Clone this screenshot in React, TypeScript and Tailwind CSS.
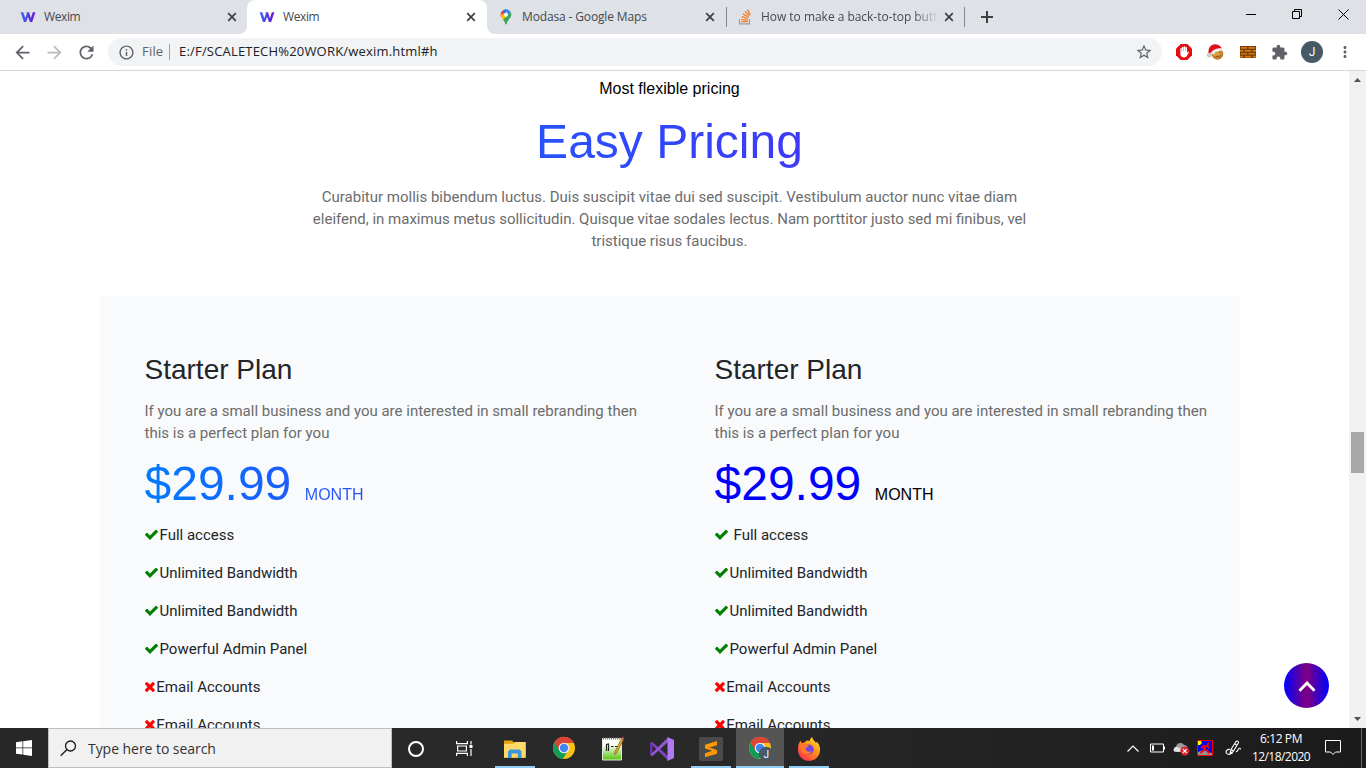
import type { ReactNode } from "react";
import {
  MdArrowBack,
  MdArrowForward,
  MdExtension,
  MdInfoOutline,
  MdMoreVert,
  MdRefresh,
  MdStarBorder,
} from "react-icons/md";

function WeximLogo() {
  return (
    <svg width="16" height="16" viewBox="0 0 16 16">
      <defs>
        <linearGradient id="wx" x1="0" x2="1">
          <stop offset="0" stopColor="#3a6cf0" />
          <stop offset="1" stopColor="#6a12d8" />
        </linearGradient>
      </defs>
      <path
        d="M.6 3.300h2.700L5.300 9.300 6.900 4.500 6.500 3.300h2.600L10.900 9.300l1.900-6h2.600L12.200 13H9.900L8 7.700 6.200 13H3.900z"
        fill="url(#wx)"
      />
    </svg>
  );
}

function MapsPin() {
  return (
    <svg width="16" height="16" viewBox="0 0 16 16">
      <path d="M2.8 7.8a5.3 5.3 0 0 1 .3-4L6 6.300z" fill="#ea4335" />
      <path d="M3 4A5.400 5.400 0 0 1 9.600.5L6 6z" fill="#1a73e8" />
      <path d="M3 3.800A5.400 5.400 0 0 1 4.400 1.800L6.900 4 5.300 6.300z" fill="#ea4335" />
      <path d="M9.500.5a5.400 5.400 0 0 1 3.300 2.700L9.500 7 8 3z" fill="#4285f4" />
      <path d="M2.700 6c.1 2 1.200 3.300 2.400 4.800L9.600 6.500 6.200 4.500z" fill="#fbbc04" />
      <path d="M12.800 3.300C14 6 13 8 11 10.300c-1.400 1.700-1.700 2.600-2.100 4.200-.3 1.300-1.400 1.300-1.700 0-.4-1.500-1-2.500-2.200-3.800z" fill="#34a853" />
      <circle cx="8" cy="5.700" r="2" fill="#fff" />
    </svg>
  );
}

function StackLogo() {
  return (
    <svg width="16" height="16" viewBox="0 0 16 16" fill="none">
      <path d="M2.500 10v4.800h10V10" stroke="#9a9ea3" strokeWidth="1.200" />
      <g stroke="#f48024" strokeWidth="1.300">
        <path d="M4.300 12.600h6.500M4.300 10.400l6.500.9M4.700 7.700l6.300 1.900M6 4.900l5.600 3.200M8 2.300l4.500 4.600M10.500.6l2.800 5.300" />
      </g>
    </svg>
  );
}

function Cross() {
  return (
    <svg width="10" height="10" viewBox="0 0 10 10" className="shrink-0">
      <path d="M1.200 1.200l7.600 7.600M8.800 1.200L1.200 8.800" stroke="#3c4043" strokeWidth="1.700" />
    </svg>
  );
}

function Tab({ icon, title, spacing = "" }: { icon: ReactNode; title: string; spacing?: string }) {
  return (
    <div className="flex h-full items-center pl-5 pr-2.5">
      {icon}
      <div className={`ml-2 w-[177px] shrink-0 overflow-hidden whitespace-nowrap text-xs text-[#45494d] ${spacing}`}>
        {title}
      </div>
      <span className="ml-1.5">
        <Cross />
      </span>
    </div>
  );
}

function TabStrip() {
  return (
    <div className="flex h-[34px] bg-white">
      <div className="w-[247px] rounded-br-lg bg-[#dee1e6]">
        <Tab icon={<WeximLogo />} title="Wexim" spacing="tracking-[-0.4px]" />
      </div>
      <div className="w-[240px] bg-[#dee1e6]">
        <div className="h-full rounded-t-lg bg-white">
          <div className="-ml-2 h-full">
            <Tab icon={<WeximLogo />} title="Wexim" spacing="tracking-[-0.4px]" />
          </div>
        </div>
      </div>
      <div className="flex flex-1 items-center rounded-bl-lg bg-[#dee1e6]">
        <div className="h-full w-[239px]">
          <div className="-ml-[9px] h-full">
            <Tab icon={<MapsPin />} title="Modasa - Google Maps" spacing="tracking-[-0.14px]" />
          </div>
        </div>
        <div className="h-5 w-px bg-[#85888c]" />
        <div className="h-full w-[237px]">
          <div className="-ml-[10px] h-full">
            <Tab
              icon={<StackLogo />}
              title="How to make a back-to-top button"
              spacing="tracking-[-0.03px] [mask-image:linear-gradient(to_right,black_152px,transparent_178px)]"
            />
          </div>
        </div>
        <div className="h-5 w-px bg-[#85888c]" />
        <svg width="12" height="12" viewBox="0 0 12 12" className="ml-[16px]">
          <path d="M6 0v12M0 6h12" stroke="#3c4043" strokeWidth="2" />
        </svg>
        <div className="ml-auto flex items-center gap-9 pb-[6px] pr-[17px]">
          <svg width="10" height="10" viewBox="0 0 10 10">
            <path d="M0 5.500h10" stroke="#000" />
          </svg>
          <svg width="10" height="10" viewBox="0 0 10 10" fill="none" stroke="#000">
            <path d="M.5 2.500h7v7h-7zM2.500 2.500v-2h7v7h-2" />
          </svg>
          <svg width="11" height="11" viewBox="0 0 11 11" stroke="#000">
            <path d="M.5.5l10 10M10.500.5l-10 10" />
          </svg>
        </div>
      </div>
    </div>
  );
}

function AdBlockIcon() {
  return (
    <svg width="16" height="16" viewBox="0 0 16 16">
      <path d="M4.700 0h6.600L16 4.700v6.600L11.300 16H4.700L0 11.300V4.700z" fill="#e40d12" />
      <path
        d="M4.300 8V4.800a.7.7 0 0 1 1.400 0V7.500h.3V3.500a.75.75 0 0 1 1.500 0v3.700h.3V2.900a.75.75 0 0 1 1.500 0v4.300h.3V3.700a.7.7 0 0 1 1.400 0V9l.8-1.200c.7-.7 1.400-.1 1 .6L11 11.800C10.300 13 9.500 13.500 8.300 13.500 6 13.500 4.300 12 4.300 10z"
        fill="#fff"
      />
    </svg>
  );
}

function CookieIcon() {
  return (
    <svg width="17" height="16" viewBox="0 0 17 16">
      <circle cx="10.500" cy="10" r="5.800" fill="#c67d28" />
      <circle cx="10.200" cy="9" r="4.300" fill="#dfa24e" />
      <path d="M8 8.500h1.500M12 8.300h1.500M8.500 12.300h4M13.500 10.500v1" stroke="#7a4312" strokeWidth="1.100" />
      <path d="M1.500 9C1 4 4 0 8.500.3c3 .2 5 1.700 6.500 4.200L4.500 8.800z" fill="#dd1118" />
      <path d="M4 8.500C7 5 11 3.800 15.300 4.500l.4 2C12 6.300 9 7.300 6.200 10.500z" fill="#f5f3ef" />
      <circle cx="2.300" cy="11" r="2" fill="#d7d4ce" stroke="#999" strokeWidth=".5" />
    </svg>
  );
}

function BrickIcon() {
  return (
    <svg width="16" height="12" viewBox="0 0 16 12">
      <rect width="16" height="12" fill="#783c06" />
      <path
        d="M1 1h6v1.700H1zM8.500 1H15v1.700H8.500zM0 4h3.500v1.700H0zM5 4h6v1.700H5zM12.500 4H16v1.700h-3.500zM1 7h6v1.600H1zM8.500 7H15v1.600H8.500zM0 9.800h3.500v1.600H0zM5 9.800h6v1.600H5zM12.500 9.800H16v1.600h-3.500z"
        fill="#d07a11"
      />
    </svg>
  );
}

function Toolbar() {
  return (
    <div className="flex h-[37px] items-center border-b border-[#d5d7da] bg-white pl-[12px] text-[#5f6368]">
      <MdArrowBack size={21} />
      <MdArrowForward size={21} className="ml-[11px] text-[#babcbe]" />
      <MdRefresh size={21} className="ml-[11px]" />
      <div className="ml-[11px] flex h-7 w-[1054px] items-center rounded-full bg-[#f1f3f4] pl-[10px] pr-[9px]">
        <MdInfoOutline size={17} />
        <span className="ml-[7px] w-[27px] text-[13px] tracking-[0.2px]">File</span>
        <span className="mr-[9px] h-4 w-px bg-[#9aa0a6]" />
        <span className="text-[13px] tracking-[0.19px] text-[#202124]">E:/F/SCALETECH%20WORK/wexim.html#h</span>
        <MdStarBorder size={18} className="ml-auto" />
      </div>
      <div className="ml-[14px] flex items-center">
        <AdBlockIcon />
        <span className="ml-[15px]">
          <CookieIcon />
        </span>
        <span className="ml-[16px]">
          <BrickIcon />
        </span>
        <MdExtension size={17} className="ml-[15px]" />
        <span className="ml-[13px] flex size-[22px] items-center justify-center rounded-full bg-[#455a64] font-['Roboto',sans-serif] text-xs text-white">
          J
        </span>
        <MdMoreVert size={18} className="ml-[13px]" />
      </div>
    </div>
  );
}

function Check() {
  return (
    <svg width="15" height="15" viewBox="0 0 1792 1792" fill="#008000" className="mb-0.5 mr-px -ml-px shrink-0">
      <path d="M1671 566q0 40-28 68l-724 724-136 136q-28 28-68 28t-68-28l-136-136-362-362q-28-28-28-68t28-68l136-136q28-28 68-28t68 28l294 295 656-657q28-28 68-28t68 28l136 136q28 28 28 68z" />
    </svg>
  );
}

function Times() {
  return (
    <svg width="11.800" height="15" viewBox="192 0 1408 1792" fill="#ff0000" className="mb-0.5 mr-px -ml-px shrink-0">
      <path d="M1490 1322q0 40-28 68l-136 136q-28 28-68 28t-68-28l-294-294-294 294q-28 28-68 28t-68-28l-136-136q-28-28-28-68t28-68l294-294-294-294q-28-28-28-68t28-68l136-136q28-28 68-28t68 28l294 294 294-294q28-28 68-28t68 28l136 136q28 28 28 68t-28 68l-294 294 294 294q28 28 28 68z" />
    </svg>
  );
}

const features = [
  { label: "Full access", ok: true },
  { label: "Unlimited Bandwidth", ok: true },
  { label: "Unlimited Bandwidth", ok: true },
  { label: "Powerful Admin Panel", ok: true },
  { label: "Email Accounts", ok: false },
  { label: "Email Accounts", ok: false },
];

function Plan({ gradient }: { gradient: boolean }) {
  return (
    <div className="w-[570px] pl-[44.500px] pt-[57px]">
      <h3 className="font-['Liberation_Sans',sans-serif] text-[28px] leading-[34px] text-[#212529]">Starter Plan</h3>
      <p className="mt-[13px] w-[510px] text-[15px] leading-[22px] text-[#6c6c6c]">
        If you are a small business and you are interested in small rebranding then this is a perfect plan for you
      </p>
      <div
        className={`mt-[11px] flex w-[510px] items-baseline font-['Liberation_Sans',sans-serif] leading-[58px] ${
          gradient ? "bg-linear-to-r/srgb from-[#007bff] to-[#6610f2] bg-clip-text text-transparent" : "text-[#0000ff]"
        }`}
      >
        <span className="text-[48px]">$29.99</span>
        <span className={`ml-[13.500px] text-base ${gradient ? "" : "text-black"}`}>MONTH</span>
      </div>
      <ul className="mt-[3px] text-[15px] text-[#212529]">
        {features.map((f, i) => (
          <li key={i} className="flex h-[38px] items-center">
            {f.ok ? <Check /> : <Times />}
            <span className={!gradient && i === 0 ? "ml-1" : ""}>{f.label}</span>
          </li>
        ))}
      </ul>
    </div>
  );
}

function ScrollBar() {
  return (
    <div className="flex w-[17px] flex-col items-center bg-[#f1f1f1] pb-[7px] pt-[7px]">
      <svg width="7" height="4" viewBox="0 0 7 4" className="shrink-0">
        <path d="M0 4L3.500 0 7 4z" fill="#505050" />
      </svg>
      <div className="mt-[350px] h-[41px] w-[13px] shrink-0 bg-[#a8a8a8]" />
      <svg width="7" height="4" viewBox="0 0 7 4" className="mt-auto shrink-0">
        <path d="M0 0h7L3.500 4z" fill="#505050" />
      </svg>
    </div>
  );
}

function Page() {
  return (
    <main className="relative flex h-[657px] overflow-hidden bg-white font-['Roboto',sans-serif]">
      <div className="w-[1349px] overflow-hidden pl-[100px]">
        <div className="w-[1140px]">
          <header className="flex h-[225px] w-[1139px] flex-col items-center text-center">
            <p className="mt-[6px] font-['Liberation_Sans',sans-serif] text-base leading-6 text-black">
              Most flexible pricing
            </p>
            <h2 className="mt-[12px] w-full bg-linear-to-r/srgb from-[#007bff] to-[#6610f2] bg-clip-text font-['Liberation_Sans',sans-serif] text-[48px] leading-[58px] text-transparent">
              Easy Pricing
            </h2>
            <p className="mt-[15px] w-[740px] text-[15px] leading-[22px] text-[#6c6c6c]">
              Curabitur mollis bibendum luctus. Duis suscipit vitae dui sed suscipit. Vestibulum auctor nunc vitae diam
              eleifend, in maximus metus sollicitudin. Quisque vitae sodales lectus. Nam porttitor justo sed mi finibus,
              vel tristique risus faucibus.
            </p>
          </header>
          <section className="flex h-[500px] bg-[#f8fafc]">
            <Plan gradient />
            <Plan gradient={false} />
          </section>
        </div>
      </div>
      <ScrollBar />
      <button className="absolute bottom-5 right-[37px] flex size-[45px] items-center justify-center rounded-full bg-[linear-gradient(to_right,blue,purple,blue)]">
        <svg width="18" height="12" viewBox="0 0 18 12" fill="none" className="mt-[3px]">
          <path d="M1.500 9.700L9 2l7.500 7.700" stroke="#fff" strokeWidth="2.800" />
        </svg>
      </button>
    </main>
  );
}

function ChromeLogo({ badge = false }: { badge?: boolean }) {
  return (
    <svg width="25" height="25" viewBox="0 0 25 25">
      <circle cx="12" cy="12" r="11" fill="#fbc116" />
      <path d="M2.500 6.500A11 11 0 0 0 11 23l4.800-8.500-7 1z" fill="#0f9d58" />
      <path d="M2.500 6.500l4.800 8 3.500-4 2-3.500H22A11 11 0 0 0 2.500 6.500z" fill="#db4437" />
      <circle cx="12" cy="12" r="5.300" fill="#f4f4f4" />
      <circle cx="12" cy="12" r="4.200" fill="#4285f4" />
      {badge && (
        <>
          <circle cx="18" cy="18" r="7.300" fill="#455a64" />
          <text x="15.500" y="21.700" fontSize="10" fill="#fff" fontFamily="Roboto, sans-serif">
            J
          </text>
        </>
      )}
    </svg>
  );
}

function ExplorerIcon() {
  return (
    <svg width="22" height="20" viewBox="0 0 22 20">
      <path d="M0 1.500h8l2 2h11.500V19H0z" fill="#e5a50f" />
      <path d="M0 5l9-.3L11 3h10.700v15.500H0z" fill="#ffda6a" />
      <path d="M4 19v-6.500L6 10.500h9.500l2 2V19h-3.700v-4.500H7.700V19z" fill="#3a96dd" />
    </svg>
  );
}

function NotepadIcon() {
  return (
    <svg width="24" height="26" viewBox="0 0 24 26">
      <defs>
        <linearGradient id="np" x1="0" y1="0" x2="0" y2="1">
          <stop offset=".3" stopColor="#fbfff4" />
          <stop offset="1" stopColor="#55c50c" />
        </linearGradient>
      </defs>
      <path d="M1.500 2.500h19v21.500h-19z" fill="url(#np)" stroke="#e6e6e6" />
      <path d="M2 2.500h18" stroke="#777" strokeWidth="2" strokeDasharray="1 1" />
      <path d="M5.500 15V8.500L7.500 8v7M10 10.500h2.500M14 10.500h2.500" stroke="#222" strokeWidth="1.200" fill="none" />
      <path d="M20.500 2.500l2 1.200-7 13.500-2 1.500.3-2.700z" fill="#e7a82b" stroke="#795019" strokeWidth=".6" />
      <path d="M20.500 2.500l1-1.700 2 1.200-1 1.700z" fill="#cf4d45" />
    </svg>
  );
}

function VisualStudioIcon() {
  return (
    <svg width="24" height="24" viewBox="0 0 24 24">
      <path d="M0 6l2.500-1L18 19v4.500z" fill="#7b42bc" />
      <path d="M0 6v12l2.500-2V8z" fill="#6a35ab" />
      <path d="M0 18l2.500 1L18 5V.5z" fill="#9357d3" />
      <path d="M17.500 0L24 3v18l-6.500 3z" fill="#b179f1" />
    </svg>
  );
}

function SublimeIcon() {
  return (
    <svg width="24" height="24" viewBox="0 0 24 24">
      <rect width="24" height="24" rx="2" fill="#4a4a4a" />
      <path d="M6 7.700L18 4v4.200l-7.500 2.400L18 13v3.700L6 20.300v-4.100l7.300-2.400L6 11.600z" fill="#ff9800" />
    </svg>
  );
}

function FirefoxIcon() {
  return (
    <svg width="24" height="24" viewBox="0 0 24 24">
      <defs>
        <linearGradient id="ff" x1="1" y1="0" x2="0.200" y2="1">
          <stop offset="0" stopColor="#fff44f" />
          <stop offset=".45" stopColor="#ff980e" />
          <stop offset="1" stopColor="#ff2a56" />
        </linearGradient>
      </defs>
      <path
        d="M1 13C.7 9 2 5.500 3.700 3.500L4.500 6l3-.5C9 3 11 3 12.500 4 13 2 14 .8 15.300 0c.2 3 2.500 3.800 4 6.200l.5-1.700C22 7 23.200 10 23 13a11 10.800 0 0 1-22 0z"
        fill="url(#ff)"
      />
      <circle cx="11.700" cy="12.500" r="5" fill="#7542e5" />
      <path d="M4 8c3-2 6-.5 8 .5-1 1.800-3 1.500-3.500 3 .5 3 3 4 6.500 2.500-1.500 4-8 4.500-10.500.5C3.200 12.500 3 10 4 8z" fill="#ff7a25" />
    </svg>
  );
}

function TaskButton({ children, open = false, active = false }: { children: ReactNode; open?: boolean; active?: boolean }) {
  return (
    <div className={`flex h-10 w-12 flex-col items-center ${active ? "bg-[#555555]" : ""}`}>
      <div className="flex h-[38px] items-center pt-[3px]">{children}</div>
      {(open || active) && <div className={`h-[2px] bg-[#92cdf5] ${active ? "w-12" : "w-10"}`} />}
    </div>
  );
}

function TaskBar() {
  return (
    <footer className="flex h-10 items-center overflow-hidden bg-linear-to-r from-[#272727] via-[#292929] to-[#1b1b1b] text-white">
      <div className="flex w-12 justify-center">
        <svg width="16" height="16" viewBox="0 0 16 16" fill="#fff">
          <path d="M0 2.200L6.500 1.300v6.200H0zM7.200 1.200L16 0v7.500H7.200zM0 8.300h6.500v6.300L0 13.700zM7.200 8.300H16V16l-8.800-1.300z" />
        </svg>
      </div>
      <div className="flex h-10 w-[344px] items-center border border-[#bdbdbd] bg-[#f1f1f1] pl-[11px] text-[#333333]">
        <svg width="17" height="17" viewBox="0 0 17 17" fill="none" stroke="#1a1a1a" strokeWidth="1.300">
          <circle cx="10.500" cy="6" r="5" />
          <path d="M7 9.500L.7 15.800" />
        </svg>
        <span className="ml-[11px] pt-0.5 text-sm tracking-[-0.05px]">Type here to search</span>
      </div>
      <div className="flex">
        <TaskButton>
          <span className="size-4 rounded-full border-2 border-white" />
        </TaskButton>
        <TaskButton>
          <svg width="17" height="15" viewBox="0 0 17 15" fill="none" stroke="#fff" strokeWidth="1.200">
            <path d="M.6 0v2.600h10.800V0M.6 15v-2.600h10.800V15M1.600 5h8.800v5H1.600zM15 0v3.500M15 8v7" />
            <path d="M13.500 4h3v3h-3z" fill="#fff" stroke="none" />
          </svg>
        </TaskButton>
      </div>
      <div className="ml-[3px] flex gap-px">
        <TaskButton open>
          <ExplorerIcon />
        </TaskButton>
        <TaskButton>
          <ChromeLogo />
        </TaskButton>
        <TaskButton>
          <NotepadIcon />
        </TaskButton>
        <TaskButton>
          <VisualStudioIcon />
        </TaskButton>
        <TaskButton open>
          <SublimeIcon />
        </TaskButton>
        <TaskButton active>
          <ChromeLogo badge />
        </TaskButton>
        <TaskButton open>
          <FirefoxIcon />
        </TaskButton>
      </div>
      <div className="ml-auto flex h-10 items-center">
        <svg width="12" height="7" viewBox="0 0 12 7" fill="none" stroke="#fff" strokeWidth="1.200">
          <path d="M.5 6.500L6 1l5.500 5.500" />
        </svg>
        <svg width="16" height="10" viewBox="0 0 16 10" fill="none" stroke="#fff" className="ml-[11px]">
          <path d="M.5 1h13v8H.5zM14.500 3.500v3" />
          <path d="M2 2.500h2v5H2z" fill="#fff" stroke="none" />
        </svg>
        <svg width="17" height="14" viewBox="0 0 17 14" className="ml-[7px] mt-px">
          <path d="M3 10A3 3 0 0 1 3 4.500C4 .5 9 0 11 3c2.500 0 4 2 3.500 5L12 10z" fill="#9b9b9b" />
          <path d="M1 9.500A3 3 0 0 1 4 5l3 1 2 4z" fill="#e2e2e2" />
          <circle cx="11.800" cy="9" r="4.500" fill="#d72835" />
          <path d="M10 7.200l3.600 3.600M13.600 7.200L10 10.800" stroke="#fff" strokeWidth="1.200" />
        </svg>
        <svg width="16" height="16" viewBox="0 0 16 16" className="ml-[7px]">
          <path d="M0 0h16v16H0z" fill="#0000f0" />
          <path d="M1 1h3l1 2-2 2H1z" fill="#ff0" />
          <path d="M1 12l5-2 5 2 4 1v2H1z" fill="#929292" />
          <path d="M12 2.500l-2 3.500 2.500 2M10 6H6L4 8.500M9 6L7 10l-3.500 3M7.500 9.500l3 1.500 1.500 2.500" stroke="#f00" strokeWidth="1.700" fill="none" />
          <path d="M.5.5h15v15H.5z" fill="none" stroke="#f00" />
        </svg>
        <svg width="17" height="17" viewBox="0 0 17 17" fill="none" stroke="#fff" strokeWidth="1.100" className="ml-[12px]">
          <path d="M5 13.500l1-4L11 1.500c1-1 3 0 2.300 1.500L8.500 11zM9.700 3.700l2.500 1.500M6 9.500l2.500 1.500M5 9.500c-3-.5-5 2-3.300 4C3 15 6.500 14.500 8 12.500M11 11.500c1 .8 1.500-1 2.500-2.500.7-1.200 2-1 2 .5" />
        </svg>
        <div className="ml-[8px] flex w-[62px] flex-col items-center text-xs leading-[18px]">
          <span className="whitespace-nowrap tracking-[-0.4px]">6:12 PM</span>
          <span className="whitespace-nowrap tracking-[-0.55px]">12/18/2020</span>
        </div>
        <svg width="16" height="16" viewBox="0 0 16 16" fill="none" stroke="#fff" className="ml-[13px]">
          <path d="M.5.5h15v11.500h-5L8 14.500 5.500 12h-5z" />
        </svg>
        <div className="ml-[20px] mr-1 h-10 w-px bg-[#666666]" />
      </div>
    </footer>
  );
}

export default function App() {
  return (
    <div className="h-[768px] w-[1366px] overflow-hidden font-['Open_Sans','Noto_Sans',sans-serif]">
      <TabStrip />
      <Toolbar />
      <Page />
      <TaskBar />
    </div>
  );
}
